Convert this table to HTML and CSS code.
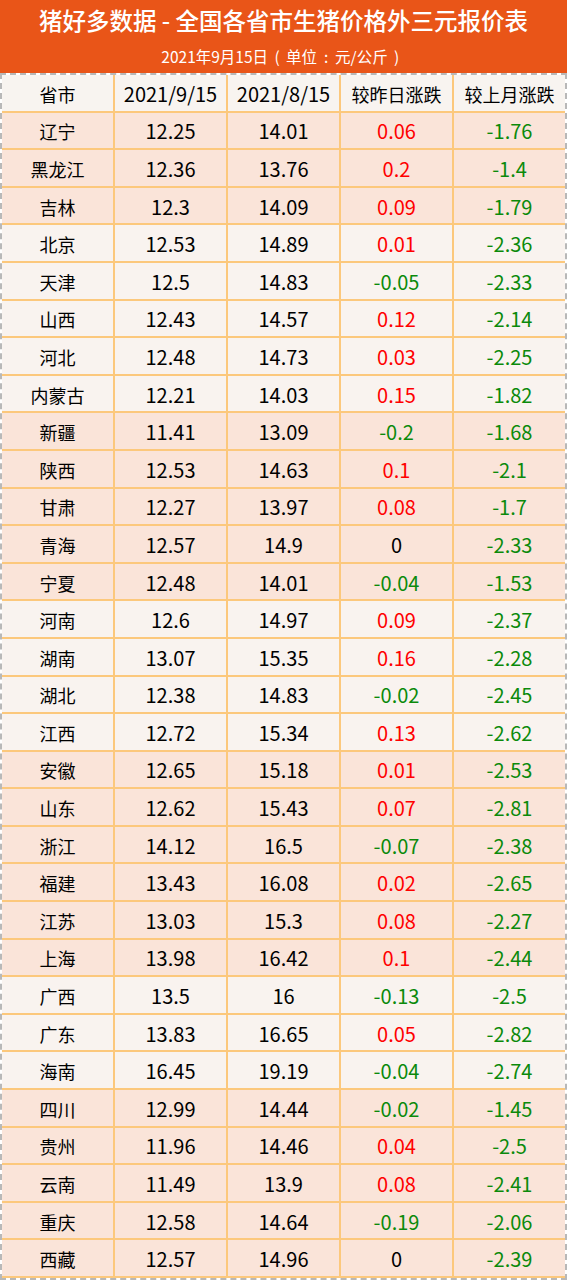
FILE: index.html
```html
<!DOCTYPE html>
<html lang="zh-CN">
<head>
<meta charset="utf-8">
<title>猪好多数据</title>
<link rel="stylesheet" href="styles.css">
</head>
<body>
<div class="page">
  <header class="banner">
    <div class="title">猪好多数据 - 全国各省市生猪价格外三元报价表</div>
    <div class="subtitle">2021年9月15日<span class="fw">(</span>单位<span class="fw">:</span>元/公斤<span class="fw">)</span></div>
  </header>
  <div class="wrap">
    <div class="grid">
      <div class="cell head">省市</div><div class="cell head">2021/9/15</div><div class="cell head">2021/8/15</div><div class="cell head zh">较昨日涨跌</div><div class="cell head zh">较上月涨跌</div>

      <div class="cell pk">辽宁</div><div class="cell pk">12.25</div><div class="cell pk">14.01</div><div class="cell pk up">0.06</div><div class="cell pk dn">-1.76</div>
      <div class="cell pk">黑龙江</div><div class="cell pk">12.36</div><div class="cell pk">13.76</div><div class="cell pk up">0.2</div><div class="cell pk dn">-1.4</div>
      <div class="cell pk">吉林</div><div class="cell pk">12.3</div><div class="cell pk">14.09</div><div class="cell pk up">0.09</div><div class="cell pk dn">-1.79</div>

      <div class="cell lt">北京</div><div class="cell lt">12.53</div><div class="cell lt">14.89</div><div class="cell lt up">0.01</div><div class="cell lt dn">-2.36</div>
      <div class="cell lt">天津</div><div class="cell lt">12.5</div><div class="cell lt">14.83</div><div class="cell lt dn">-0.05</div><div class="cell lt dn">-2.33</div>
      <div class="cell lt">山西</div><div class="cell lt">12.43</div><div class="cell lt">14.57</div><div class="cell lt up">0.12</div><div class="cell lt dn">-2.14</div>
      <div class="cell lt">河北</div><div class="cell lt">12.48</div><div class="cell lt">14.73</div><div class="cell lt up">0.03</div><div class="cell lt dn">-2.25</div>
      <div class="cell lt">内蒙古</div><div class="cell lt">12.21</div><div class="cell lt">14.03</div><div class="cell lt up">0.15</div><div class="cell lt dn">-1.82</div>

      <div class="cell pk">新疆</div><div class="cell pk">11.41</div><div class="cell pk">13.09</div><div class="cell pk dn">-0.2</div><div class="cell pk dn">-1.68</div>
      <div class="cell pk">陕西</div><div class="cell pk">12.53</div><div class="cell pk">14.63</div><div class="cell pk up">0.1</div><div class="cell pk dn">-2.1</div>
      <div class="cell pk">甘肃</div><div class="cell pk">12.27</div><div class="cell pk">13.97</div><div class="cell pk up">0.08</div><div class="cell pk dn">-1.7</div>
      <div class="cell pk">青海</div><div class="cell pk">12.57</div><div class="cell pk">14.9</div><div class="cell pk">0</div><div class="cell pk dn">-2.33</div>
      <div class="cell pk">宁夏</div><div class="cell pk">12.48</div><div class="cell pk">14.01</div><div class="cell pk dn">-0.04</div><div class="cell pk dn">-1.53</div>

      <div class="cell lt">河南</div><div class="cell lt">12.6</div><div class="cell lt">14.97</div><div class="cell lt up">0.09</div><div class="cell lt dn">-2.37</div>
      <div class="cell lt">湖南</div><div class="cell lt">13.07</div><div class="cell lt">15.35</div><div class="cell lt up">0.16</div><div class="cell lt dn">-2.28</div>
      <div class="cell lt">湖北</div><div class="cell lt">12.38</div><div class="cell lt">14.83</div><div class="cell lt dn">-0.02</div><div class="cell lt dn">-2.45</div>
      <div class="cell lt">江西</div><div class="cell lt">12.72</div><div class="cell lt">15.34</div><div class="cell lt up">0.13</div><div class="cell lt dn">-2.62</div>

      <div class="cell pk">安徽</div><div class="cell pk">12.65</div><div class="cell pk">15.18</div><div class="cell pk up">0.01</div><div class="cell pk dn">-2.53</div>
      <div class="cell pk">山东</div><div class="cell pk">12.62</div><div class="cell pk">15.43</div><div class="cell pk up">0.07</div><div class="cell pk dn">-2.81</div>
      <div class="cell pk">浙江</div><div class="cell pk">14.12</div><div class="cell pk">16.5</div><div class="cell pk dn">-0.07</div><div class="cell pk dn">-2.38</div>
      <div class="cell pk">福建</div><div class="cell pk">13.43</div><div class="cell pk">16.08</div><div class="cell pk up">0.02</div><div class="cell pk dn">-2.65</div>
      <div class="cell pk">江苏</div><div class="cell pk">13.03</div><div class="cell pk">15.3</div><div class="cell pk up">0.08</div><div class="cell pk dn">-2.27</div>
      <div class="cell pk">上海</div><div class="cell pk">13.98</div><div class="cell pk">16.42</div><div class="cell pk up">0.1</div><div class="cell pk dn">-2.44</div>

      <div class="cell lt">广西</div><div class="cell lt">13.5</div><div class="cell lt">16</div><div class="cell lt dn">-0.13</div><div class="cell lt dn">-2.5</div>
      <div class="cell lt">广东</div><div class="cell lt">13.83</div><div class="cell lt">16.65</div><div class="cell lt up">0.05</div><div class="cell lt dn">-2.82</div>
      <div class="cell lt">海南</div><div class="cell lt">16.45</div><div class="cell lt">19.19</div><div class="cell lt dn">-0.04</div><div class="cell lt dn">-2.74</div>

      <div class="cell pk">四川</div><div class="cell pk">12.99</div><div class="cell pk">14.44</div><div class="cell pk dn">-0.02</div><div class="cell pk dn">-1.45</div>
      <div class="cell pk">贵州</div><div class="cell pk">11.96</div><div class="cell pk">14.46</div><div class="cell pk up">0.04</div><div class="cell pk dn">-2.5</div>
      <div class="cell pk">云南</div><div class="cell pk">11.49</div><div class="cell pk">13.9</div><div class="cell pk up">0.08</div><div class="cell pk dn">-2.41</div>
      <div class="cell pk">重庆</div><div class="cell pk">12.58</div><div class="cell pk">14.64</div><div class="cell pk dn">-0.19</div><div class="cell pk dn">-2.06</div>
      <div class="cell pk">西藏</div><div class="cell pk">12.57</div><div class="cell pk">14.96</div><div class="cell pk">0</div><div class="cell pk dn">-2.39</div>
    </div>
  </div>
</div>
</body>
</html>
```

FILE: styles.css
```css
html, body {
  margin: 0;
  padding: 0;
  background: #ffffff;
}

body {
  font-family: "Noto Sans CJK SC", sans-serif;
  color: #000000;
}

.page {
  width: 567px;
}

.banner {
  height: 73px;
  background: #e95518;
  color: #ffffff;
  display: flex;
  flex-direction: column;
  align-items: center;
  box-sizing: border-box;
  padding-top: 4px;
}

.title {
  font-size: 23.5px;
  line-height: 32px;
  font-weight: 500;
  white-space: nowrap;
}

.subtitle {
  margin-top: 9px;
  font-size: 15.5px;
  line-height: 22px;
  white-space: nowrap;
}

.fw {
  display: inline-block;
  width: 18px;
  text-align: center;
}

.wrap {
  border: 2px dashed #b8b8b8;
  height: 1207px;
  box-sizing: border-box;
}

.grid {
  display: grid;
  grid-template-columns: repeat(5, 1fr);
  grid-auto-rows: 35.6px;
  gap: 2px;
  background: #fcc87c;
  height: 100%;
}

.cell {
  display: flex;
  align-items: center;
  justify-content: center;
  padding-top: 2px;
  box-sizing: border-box;
  font-size: 20px;
  line-height: 24px;
  white-space: nowrap;
}

.cell:nth-child(5n+1),
.cell.zh {
  font-size: 18px;
}

.head {
  background: #f8f4f0;
}

.pk {
  background: #fae4d9;
}

.lt {
  background: #f9f3ef;
}

.up {
  color: #ff0000;
}

.dn {
  color: #0b8a0b;
}
```
